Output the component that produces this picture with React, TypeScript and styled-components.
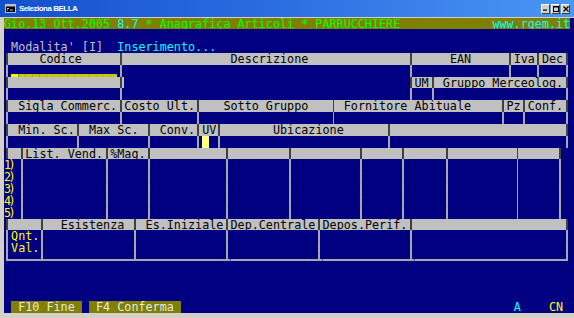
import React from "react";
import styled, { createGlobalStyle } from "styled-components";

// console palette
const NAVY = "#000080";
const SILVER = "#c0c0c0";
const OLIVE = "#808000";
const LIME = "#00ff00";
const CYAN = "#00ffff";
const YELLOW = "#ffff00";
const INK = "#000000";
const DARK = "#404040";
const RULE = "#a8a8a8";

const COLS = 80;
const ROWS = 25;
const CW = 7.08;
const RH = 11.84;

type Joint = {
  up?: boolean;
  down?: boolean;
  left?: boolean;
  right?: boolean;
  line: string;
  bgL: string;
  bgR: string;
};

type Look = "plain" | "blank" | "label";
type Cell = { ch: string; fg: string; bg: string; look?: Look; joint?: Joint };

const GlobalStyle = createGlobalStyle`
  html, body {
    margin: 0;
    padding: 0;
    background: #ffffff;
  }
`;

const Window = styled.div`
  width: 574px;
  height: 318px;
  display: flex;
  flex-direction: column;
  background: #d4d0c8;
  overflow: hidden;
`;

const TitleBar = styled.div`
  height: 17px;
  flex: none;
  display: flex;
  align-items: center;
  gap: 3px;
  padding: 0 4px 0 5px;
  background: linear-gradient(90deg, #1450cc 0%, #2c6fe2 50%, #4a97f4 100%);
  color: #ffffff;
  font: bold 8px "Liberation Sans", Arial, sans-serif;
`;

const Caption = styled.span`
  flex: 1;
  letter-spacing: -0.5px;
`;

const CaptionButtons = styled.div`
  display: flex;
  gap: 1px;
`;

const CaptionButton = styled.div`
  width: 9px;
  height: 10px;
  box-sizing: border-box;
  display: flex;
  align-items: center;
  justify-content: center;
  background: #d4d0c8;
  border: 1px solid;
  border-color: #ffffff #404040 #404040 #ffffff;
`;

const Client = styled.div`
  flex: 1;
  padding: 0.5px 0 0 4px;
`;

const Screen = styled.div`
  display: grid;
  grid-template-columns: repeat(${COLS}, ${CW}px);
  grid-auto-rows: ${RH}px;
  background: ${NAVY};
  font-family: "DejaVu Sans Mono", "Liberation Mono", monospace;
  font-size: 11.76px;
  line-height: ${RH}px;
`;

const Line = styled.div`
  grid-column: 1 / -1;
  display: grid;
  grid-template-columns: repeat(${COLS}, ${CW}px);
  grid-template-rows: ${RH}px;
`;

const Text = styled.span<{ $span: number; $fg: string; $bg: string }>`
  grid-column: span ${(p) => p.$span};
  height: ${RH}px;
  color: ${(p) => p.$fg};
  background: ${(p) => p.$bg};
  white-space: pre;
  line-height: ${RH + 1}px;
`;

// underscores of an empty input field, lifted so they sit inside their own row
const Blank = styled(Text)`
  font-weight: bold;
  line-height: ${RH - 3.4}px;
  text-shadow: 0 0.6px currentColor, 0 -0.6px currentColor;
`;

// the narrow "1)" ... "5)" row numbers
const RowLabel = styled(Text)`
  letter-spacing: -2.6px;
`;

const vLine = (c: string) =>
  `linear-gradient(90deg, transparent calc(50% - 1px), ${c} calc(50% - 1px), ${c} calc(50% + 1px), transparent calc(50% + 1px))`;
const hLine = (c: string) =>
  `linear-gradient(180deg, transparent calc(50% - 1px), ${c} calc(50% - 1px), ${c} calc(50% + 1px), transparent calc(50% + 1px))`;

const Rule = styled.span<{ $span: number; $j: Joint }>`
  grid-column: span ${(p) => p.$span};
  background: ${({ $j }) => {
    const layers: string[] = [];
    if ($j.up && $j.down) layers.push(`${vLine($j.line)} center / 100% 100% no-repeat`);
    else if ($j.up) layers.push(`${vLine($j.line)} top / 100% calc(50% + 1px) no-repeat`);
    else if ($j.down) layers.push(`${vLine($j.line)} bottom / 100% calc(50% + 1px) no-repeat`);
    if ($j.left && $j.right) layers.push(`${hLine($j.line)} center / 100% 100% no-repeat`);
    else if ($j.left) layers.push(`${hLine($j.line)} left / calc(50% + 1px) 100% no-repeat`);
    else if ($j.right) layers.push(`${hLine($j.line)} right / calc(50% + 1px) 100% no-repeat`);
    layers.push(`linear-gradient(90deg, ${$j.bgL} 50%, ${$j.bgR} 50%)`);
    return layers.join(", ");
  }};
`;

function buildScreen(): Cell[][] {
  const g: Cell[][] = Array.from({ length: ROWS }, () =>
    Array.from({ length: COLS }, () => ({ ch: " ", fg: SILVER, bg: NAVY }))
  );
  const put = (r: number, c: number, s: string, fg: string, bg?: string, look: Look = "plain") => {
    [...s].forEach((ch, i) => {
      const cell = g[r][c + i];
      g[r][c + i] = { ch, fg, bg: bg ?? cell.bg, look };
    });
  };
  const fill = (r: number, from: number, to: number, bg: string) => {
    for (let c = from; c <= to; c++) g[r][c] = { ...g[r][c], bg };
  };
  const head = (r: number, seps: number[], labels: [number, string][] = [], tail = NAVY) => {
    fill(r, seps[0], seps[seps.length - 1], SILVER);
    labels.forEach(([c, s]) => put(r, c, s, INK));
    seps.forEach((c, i) => {
      g[r][c] = {
        ch: " ",
        fg: INK,
        bg: SILVER,
        joint: {
          up: true,
          down: true,
          line: DARK,
          bgL: i === 0 ? NAVY : SILVER,
          bgR: i === seps.length - 1 ? tail : SILVER,
        },
      };
    });
  };
  const body = (r: number, seps: number[]) => {
    seps.forEach((c) => {
      g[r][c] = { ch: " ", fg: RULE, bg: NAVY, joint: { up: true, down: true, line: RULE, bgL: NAVY, bgR: NAVY } };
    });
  };

  // status line
  fill(0, 0, COLS - 1, OLIVE);
  put(0, 0, "Gio.13 Ott.2005 ", LIME);
  put(0, 16, "8.7", CYAN);
  put(0, 19, " * Anagrafica Articoli * PARRUCCHIERE", LIME);
  put(0, 69, "www.rgem.it", CYAN);

  put(2, 1, "Modalita' [I]", SILVER);
  put(2, 16, "Inserimento...", CYAN);

  const r3 = [0, 16, 57, 71, 75, 79];
  head(3, r3, [[5, "Codice"], [32, "Descrizione"], [63, "EAN"], [72, "Iva"], [76, "Dec"]]);
  body(4, r3);
  put(4, 1, "_", YELLOW, NAVY, "blank");
  put(4, 2, "_".repeat(14), "#c8c800", NAVY, "blank");

  head(5, [0, 16], [], SILVER);
  head(5, [57, 60, 79], [[58, "UM"], [62, "Gruppo Merceolog."]]);
  body(6, [0, 16, 57, 60, 79]);

  const r7 = [0, 16, 27, 46, 70, 73, 79];
  head(7, r7, [[2, "Sigla Commerc."], [17, "Costo Ult."], [31, "Sotto Gruppo"], [48, "Fornitore Abituale"], [71, "Pz"], [74, "Conf."]]);
  body(8, r7);

  const r9 = [0, 10, 20, 27, 30, 54, 79];
  head(9, r9, [[2, "Min. Sc."], [12, "Max Sc."], [22, "Conv."], [28, "UV"], [38, "Ubicazione"]]);
  body(10, r9);
  fill(10, 28, 28, "#ffff80");

  const r11 = [2, 14, 20, 31, 40, 50, 56, 62, 72, 78];
  head(11, [0, ...r11], [[3, "List. Vend."], [15, "%Mag."]]);
  for (let i = 1; i <= 5; i++) {
    body(11 + i, r11);
    put(11 + i, 0, `${i})`, YELLOW, NAVY, "label");
  }

  const r17 = [0, 5, 18, 31, 44, 57, 79];
  head(17, r17, [[8, "Esistenza"], [20, "Es.Iniziale"], [32, "Dep.Centrale"], [45, "Depos.Perif."]]);
  body(18, r17);
  body(19, r17);
  put(18, 1, "Qnt.", YELLOW);
  put(19, 1, "Val.", YELLOW);
  for (let c = 0; c < COLS; c++) {
    g[20][c] = {
      ch: " ",
      fg: RULE,
      bg: NAVY,
      joint: {
        up: r17.includes(c),
        left: c > 0,
        right: c < COLS - 1,
        line: RULE,
        bgL: NAVY,
        bgR: NAVY,
      },
    };
  }

  put(24, 1, " F10 Fine ", "#e8e8e8", OLIVE);
  put(24, 12, " F4 Conferma ", "#e8e8e8", OLIVE);
  put(24, 72, "A", CYAN);
  put(24, 77, "CN", YELLOW);
  return g;
}

type Seg =
  | { kind: "text"; span: number; text: string; fg: string; bg: string; look: Look }
  | { kind: "rule"; span: number; joint: Joint };

function toSegments(row: Cell[]): Seg[] {
  const out: Seg[] = [];
  row.forEach((cell) => {
    const last = out[out.length - 1];
    if (cell.joint) {
      const j = cell.joint;
      const flat = !j.up && !j.down;
      if (flat && last && last.kind === "rule" && !last.joint.up && !last.joint.down && last.joint.left && j.left && j.right && last.joint.right) {
        last.span += 1;
      } else {
        out.push({ kind: "rule", span: 1, joint: j });
      }
      return;
    }
    const look = cell.look ?? "plain";
    if (
      last &&
      last.kind === "text" &&
      last.bg === cell.bg &&
      (cell.ch === " " && look === "plain" ? true : last.fg === cell.fg && last.look === look)
    ) {
      last.span += 1;
      last.text += cell.ch;
    } else {
      out.push({ kind: "text", span: 1, text: cell.ch, fg: cell.fg, bg: cell.bg, look });
    }
  });
  return out;
}

const ConsoleIcon = () => (
  <svg width="11" height="9" viewBox="0 0 11 9">
    <rect x="0.5" y="0.5" width="10" height="8" fill="#000" stroke="#c0c0c0" />
    <rect x="1" y="1" width="9" height="1.5" fill="#c0c0c0" />
    <path d="M2 4.5h2M2 6h1M5 6h3" stroke="#fff" strokeWidth="0.8" />
  </svg>
);

const App = () => {
  const screen = buildScreen();
  return (
    <>
      <GlobalStyle />
      <Window>
        <TitleBar>
          <ConsoleIcon />
          <Caption>Seleziona BELLA</Caption>
          <CaptionButtons>
            <CaptionButton>
              <svg width="5" height="5" viewBox="0 0 5 5"><rect x="0" y="3.5" width="4" height="1.2" fill="#000" /></svg>
            </CaptionButton>
            <CaptionButton>
              <svg width="6" height="6" viewBox="0 0 6 6"><rect x="0.5" y="0.5" width="5" height="5" fill="none" stroke="#000" /><rect x="0" y="0" width="6" height="1.5" fill="#000" /></svg>
            </CaptionButton>
            <CaptionButton>
              <svg width="6" height="6" viewBox="0 0 6 6"><path d="M0.5 0.5l5 5M5.5 0.5l-5 5" stroke="#000" strokeWidth="1.3" /></svg>
            </CaptionButton>
          </CaptionButtons>
        </TitleBar>
        <Client>
          <Screen>
            {screen.map((row, r) => (
              <Line key={r}>
                {toSegments(row).map((s, i) => {
                  if (s.kind === "rule") return <Rule key={i} $span={s.span} $j={s.joint} />;
                  const Part = s.look === "blank" ? Blank : s.look === "label" ? RowLabel : Text;
                  return (
                    <Part key={i} $span={s.span} $fg={s.fg} $bg={s.bg}>
                      {s.text}
                    </Part>
                  );
                })}
              </Line>
            ))}
          </Screen>
        </Client>
      </Window>
    </>
  );
};

export default App;
